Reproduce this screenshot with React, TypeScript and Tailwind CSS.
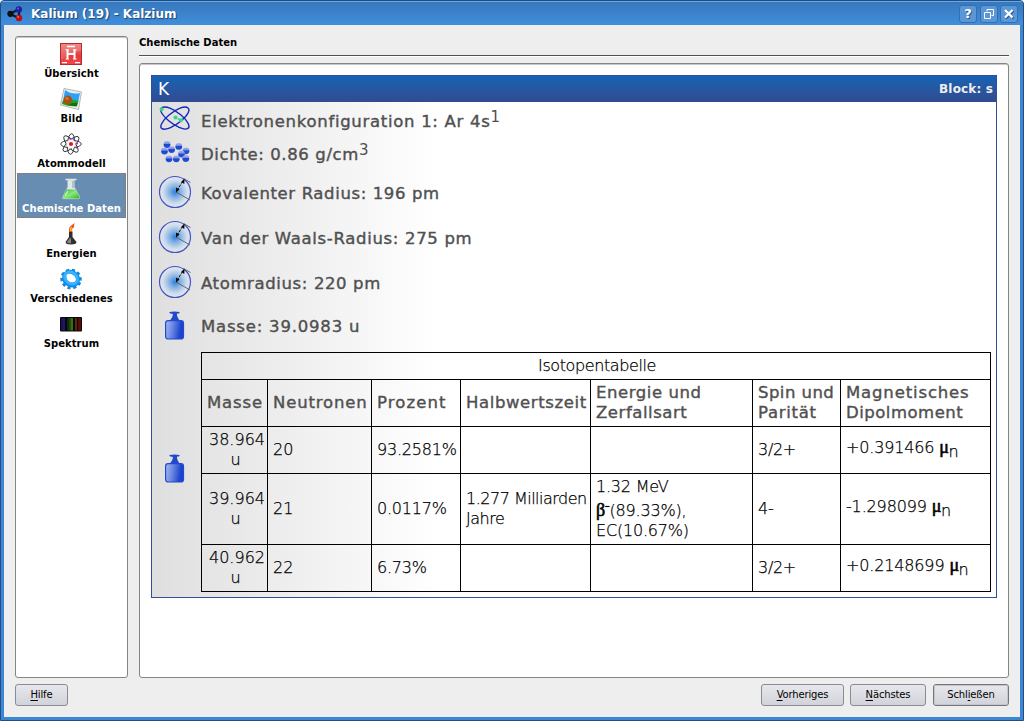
import type { ReactNode } from "react";

function LogoIcon() {
  return (
    <svg width="16" height="16" viewBox="0 0 16 16">
      <path d="M3 8 L12 3 M3 8 L12 12 M12 3 V12" stroke="#111827" strokeWidth="2.2" />
      <circle cx="3.4" cy="7.8" r="3.1" fill="#101010" />
      <circle cx="11.8" cy="3.4" r="3.2" fill="#1d1f9c" />
      <circle cx="12" cy="12" r="3.2" fill="#b80f12" />
      <circle cx="11" cy="2.4" r="1" fill="#6468d8" />
      <circle cx="11.2" cy="11" r="1" fill="#f06a6a" />
    </svg>
  );
}

function OverviewIcon() {
  return (
    <svg width="22" height="22" viewBox="0 0 22 22">
      <defs>
        <linearGradient id="ov" x1="0" y1="0" x2="0" y2="1">
          <stop offset="0" stopColor="#e97070" />
          <stop offset="0.6" stopColor="#e83a3a" />
          <stop offset="1" stopColor="#f04848" />
        </linearGradient>
      </defs>
      <rect x="0.5" y="0.5" width="21" height="21" fill="url(#ov)" stroke="#b92b2b" />
      <path d="M1 1 H21 V8 Q12 9 1 17Z" fill="#fff" opacity="0.18" />
      <path d="M7.5 6.5 V16 M14.5 6.5 V16 M7.5 11 H14.5" stroke="#fff" strokeWidth="2" fill="none" />
      <path d="M5.5 6.8 H9 M13 6.8 H16.5 M5.5 16 H9 M13 16 H16.5" stroke="#fff" strokeWidth="1" />
      <path d="M7 3.5 H15 M2 19.7 H7 M15 19.7 H20" stroke="#fff" strokeWidth="1.3" />
    </svg>
  );
}

function PictureIcon() {
  return (
    <svg width="22" height="22" viewBox="0 0 22 22">
      <path d="M4 0.5 L21.5 4 L18.5 21.5 L0.5 17Z" fill="#eee" stroke="#9a9a9a" strokeWidth="0.7" />
      <path d="M5 2 Q12 7 20 5 L18 15 L3 13Z" fill="#2ba2f6" />
      <path d="M2.5 13 Q10 10 18.4 13 L17 18 Q9 19 2 16Z" fill="#22a31c" />
      <path d="M8 17 Q13 14 17.7 15 L16.5 18.5Z" fill="#0e6e10" />
      <circle cx="7.8" cy="12" r="4.4" fill="#a84f12" />
      <circle cx="7" cy="10.5" r="1.8" fill="#cc7330" />
    </svg>
  );
}

function AtomIcon() {
  return (
    <svg width="22" height="22" viewBox="0 0 22 22" fill="none">
      <g stroke="#2c2c2c" strokeWidth="0.9">
        <ellipse cx="11" cy="11" rx="10.3" ry="3.7" />
        <ellipse cx="11" cy="11" rx="10.3" ry="3.7" transform="rotate(50 11 11)" />
        <ellipse cx="11" cy="11" rx="10.3" ry="3.7" transform="rotate(94 11 11)" />
        <ellipse cx="11" cy="11" rx="10.3" ry="3.7" transform="rotate(137 11 11)" />
      </g>
      <circle cx="11" cy="11" r="4.6" fill="#fff" />
      <circle cx="11" cy="11" r="2.1" fill="#f01414" />
      <g fill="#9a28e0">
        <circle cx="9" cy="5.5" r="1" />
        <circle cx="14" cy="6" r="1" />
        <circle cx="17" cy="10.5" r="1" />
        <circle cx="16.5" cy="14.5" r="1" />
      </g>
    </svg>
  );
}

function FlaskIcon() {
  return (
    <svg width="22" height="22" viewBox="0 0 22 22">
      <defs>
        <linearGradient id="fl" x1="0" y1="0" x2="1" y2="1">
          <stop offset="0" stopColor="#35a84a" />
          <stop offset="0.5" stopColor="#8bea78" />
          <stop offset="1" stopColor="#25b52b" />
        </linearGradient>
      </defs>
      <path d="M7.5 2 H14.5 V9 L20 19 Q20 21 18 21 H4 Q2 21 2.5 19 L7.5 9Z" fill="#dfe8e8" stroke="#9fb4b8" strokeWidth="0.6" />
      <path d="M6.5 11.5 H15.5 L19.5 19 Q19.5 20.5 17.5 20.5 H4.5 Q2.5 20.5 3 19Z" fill="url(#fl)" />
      <path d="M5.5 1.5 H16.5" stroke="#e5e5e5" strokeWidth="1.6" />
      <path d="M13 3 V10" stroke="#a0aeb2" strokeWidth="1.3" />
      <path d="M8 13 L5 18" stroke="#c4ffb8" strokeWidth="1.3" />
    </svg>
  );
}

function BurnerIcon() {
  return (
    <svg width="22" height="22" viewBox="0 0 22 22">
      <path d="M9 9 H12.5 V14 L16.5 19 Q16.5 21.5 11 21.5 Q5.5 21.5 5.5 19 L9 14Z" fill="#303030" />
      <path d="M9.5 15.5 L11 15 V20.5 L6.5 19.5Z" fill="#858585" />
      <path d="M9 9 Q7.5 3.5 15 0 Q13 3 14.5 4 Q11 5 12.5 9Z" fill="#e85018" />
      <path d="M10 8 Q9 5 12 3.5 Q11 6 12 8Z" fill="#ffc22c" />
    </svg>
  );
}

function GearIcon() {
  return (
    <svg width="22" height="22" viewBox="0 0 22 22" fill="none">
      <ellipse cx="11" cy="11" rx="9" ry="8.5" stroke="#1685d7" strokeWidth="3.6" strokeDasharray="3 2.54" transform="rotate(20 11 11)" />
      <ellipse cx="10.8" cy="10.7" rx="7" ry="6.1" stroke="#138be7" strokeWidth="4.7" transform="rotate(38 11 11)" />
      <ellipse cx="10.5" cy="10.2" rx="6.8" ry="5.4" stroke="#36b3ff" strokeWidth="3" transform="rotate(38 11 11)" />
      <ellipse cx="11" cy="9.8" rx="5.3" ry="3.4" fill="#fff" transform="rotate(35 11 10)" />
    </svg>
  );
}

function SpectrumIcon() {
  return (
    <svg width="22" height="22" viewBox="0 0 22 22">
      <rect x="0" y="4" width="22" height="14.5" rx="1" fill="#080808" />
      <g>
        <rect x="1" y="5" width="2" height="12.5" fill="#211044" />
        <rect x="3" y="5" width="2" height="12.5" fill="#24127c" />
        <rect x="7" y="5" width="2" height="12.5" fill="#072d15" />
        <rect x="9" y="5" width="2" height="12.5" fill="#174b10" />
        <rect x="11" y="5" width="2" height="12.5" fill="#49690c" />
        <rect x="15" y="5" width="2" height="12.5" fill="#58290a" />
        <rect x="18" y="5" width="3" height="12.5" fill="#5b0b0b" />
      </g>
    </svg>
  );
}

function OrbitIcon() {
  return (
    <svg width="32" height="26" viewBox="0 0 32 26" fill="none">
      <path
        d="M2.5 3 C6 0 15 4 22 10 C29 16 32 22 28.5 23.7 C25 25.5 16 21 10 16 C3 10 0 5 2.5 3Z"
        stroke="#1426bd"
        strokeWidth="1.4"
      />
      <path
        d="M29 3 C26 0 17 4 10 10 C3 16 0 22 3 23.7 C6 25.5 15 22 22 16 C29 10 31.5 5 29 3Z"
        stroke="#1426bd"
        strokeWidth="1.4"
      />
      <g fill="#35d583">
        <circle cx="2.6" cy="4.3" r="2" />
        <circle cx="16.5" cy="12.5" r="2" />
        <circle cx="22" cy="15.3" r="2" />
        <circle cx="19.5" cy="14" r="1" />
      </g>
    </svg>
  );
}

function DensityIcon() {
  const balls = [
    [6, 3.5], [17.8, 5.4], [3.5, 10], [10.6, 8.6], [25, 9.8], [20.5, 13], [8, 17.8], [15.3, 17.8], [24.8, 17.5],
  ];
  return (
    <svg width="29" height="22" viewBox="0 0 29 22">
      <defs>
        <linearGradient id="ball" x1="0" y1="0" x2="0" y2="1">
          <stop offset="0" stopColor="#a5b6f2" />
          <stop offset="0.4" stopColor="#7590e8" />
          <stop offset="0.5" stopColor="#2043c9" />
          <stop offset="1" stopColor="#2450db" />
        </linearGradient>
      </defs>
      {balls.map(([x, y]) => (
        <circle key={`${x}-${y}`} cx={x} cy={y} r="3.4" fill="url(#ball)" />
      ))}
    </svg>
  );
}

function RadiusIcon() {
  return (
    <svg width="34" height="34" viewBox="0 0 34 34">
      <defs>
        <radialGradient id="rad">
          <stop offset="0" stopColor="#2f7fd8" />
          <stop offset="0.35" stopColor="#83b1e4" />
          <stop offset="0.75" stopColor="#cfdcec" />
          <stop offset="1" stopColor="#e4e7ee" />
        </radialGradient>
      </defs>
      <circle cx="17" cy="17" r="15.5" fill="url(#rad)" stroke="#4455c2" strokeWidth="1.2" />
      <path d="M18 17 L32 25 M25.5 3.5 L32.5 7.5" stroke="#555e6a" strokeWidth="0.9" />
      <path d="M19 15.5 L25.5 5" stroke="#111" strokeWidth="1" strokeDasharray="3 1" />
      <path d="M26.5 3.5 L26.3 9 L23 7Z M18 17.5 L18 12.5 L21.5 14.5Z" fill="#0a0a0a" />
    </svg>
  );
}

function WeightIcon() {
  return (
    <svg width="20" height="29" viewBox="0 0 20 29">
      <defs>
        <linearGradient id="wt" x1="0" y1="0" x2="1" y2="0.15">
          <stop offset="0" stopColor="#a9bbf0" />
          <stop offset="0.45" stopColor="#6784e2" />
          <stop offset="0.9" stopColor="#1b43cd" />
        </linearGradient>
      </defs>
      <path d="M4.5 1 Q9.500 0 14.500 1 Q15 2.500 12.500 2.500 L11.800 3 Q12 6.500 14.500 9.500 H5 Q8 6 8 3 L5.500 2.500 Q4 2 4.500 1Z" fill="#2148cd" />
      <rect x="0.6" y="9.7" width="17.9" height="18.3" rx="2.5" fill="url(#wt)" stroke="#2449ce" strokeWidth="1.2" />
    </svg>
  );
}

const nav: { label: string; icon: ReactNode; active?: boolean }[] = [
  { label: "Übersicht", icon: <OverviewIcon /> },
  { label: "Bild", icon: <PictureIcon /> },
  { label: "Atommodell", icon: <AtomIcon /> },
  { label: "Chemische Daten", icon: <FlaskIcon />, active: true },
  { label: "Energien", icon: <BurnerIcon /> },
  { label: "Verschiedenes", icon: <GearIcon /> },
  { label: "Spektrum", icon: <SpectrumIcon /> },
];

function TitleButton({ children }: { children: ReactNode }) {
  return (
    <div className="flex h-[18px] w-[18px] items-center justify-center rounded-[3px] border border-[#3470b0] bg-[#5b96d6]">
      {children}
    </div>
  );
}

function DataRow({ icon, row, text = "pt-[2px] tracking-[0.62px]", children }: { icon: ReactNode; row: string; text?: string; children: ReactNode }) {
  return (
    <div className={`flex items-center ${row}`}>
      <div className="flex w-[46px] shrink-0 justify-center pb-[2px]">{icon}</div>
      <div className={`ml-[3px] whitespace-nowrap text-[16.5px] leading-[20px] text-[#505050] [-webkit-text-stroke:0.4px_#505050] ${text}`}>
        {children}
      </div>
    </div>
  );
}

function Exponent({ children }: { children: ReactNode }) {
  return <sup className="top-[-5px] text-[15px] [-webkit-text-stroke:0px]">{children}</sup>;
}

function Button({ before = "", hot, after, width, primary }: { before?: string; hot: string; after: string; width: string; primary?: boolean }) {
  return (
    <button
      className={`flex h-[22px] items-center justify-center rounded-[3px] border bg-linear-to-b from-[#e7e8ed] to-[#d2d3da] text-[10px] tracking-[-0.15px] text-black ${width} ${
        primary ? "ml-[1px] border-[#70767a] outline outline-1 -outline-offset-2 outline-[#c4c6ca]" : "border-[#8b8c91]"
      }`}
    >
      <span className="-translate-y-px whitespace-pre">
        {before}
        <span className="underline underline-offset-2">{hot}</span>
        {after}
      </span>
    </button>
  );
}

function Greek({ children }: { children: ReactNode }) {
  return (
    <span className="font-['Liberation_Serif',serif] text-[18px] font-normal leading-none tracking-[-0.5px] [-webkit-text-stroke:0.6px_#000]">
      {children}
    </span>
  );
}

function Moment({ value }: { value: string }) {
  return (
    <span className="relative -top-[2px] whitespace-nowrap">
      {value} <Greek>μ</Greek>
      <sub className="bottom-[-4px] text-[16px]">n</sub>
    </span>
  );
}

const cell = "border-b border-r border-black px-[5px] py-0 align-middle";

export default function App() {
  const isotopes = [
    { mass: "38.964", n: "20", pct: "93.2581%", half: null, energy: null, spin: "3/2+", moment: "+0.391466", h: "h-[47px]" },
    {
      mass: "39.964",
      n: "21",
      pct: "0.0117%",
      half: <>1.277 Milliarden<br />Jahre</>,
      energy: (
        <>
          <div>1.32 MeV</div>
          <div className="pt-[4px]">
            <Greek>β</Greek>
            <sup className="top-[-6px] text-[14px] [-webkit-text-stroke:0.6px_#000]">-</sup>(89.33%),
          </div>
          <div>EC(10.67%)</div>
        </>
      ),
      spin: "4-",
      moment: "-1.298099",
      h: "h-[71px]",
    },
    { mass: "40.962", n: "22", pct: "6.73%", half: null, energy: null, spin: "3/2+", moment: "+0.2148699", h: "h-[47px]" },
  ];

  return (
    <div className="flex h-[721px] w-[1024px] flex-col overflow-hidden rounded-t-[4px] border border-[#244c7c] bg-[#3c86d3] font-['DejaVu_Sans',sans-serif]">
      <header className="flex h-[24px] shrink-0 items-center border-t border-[#62a8ed] bg-linear-to-b from-[#3778bc] to-[#408edc] pl-[6px] pr-[5px]">
        <LogoIcon />
        <h1 className="ml-[8px] flex-1 text-[12px] font-bold text-white [text-shadow:1px_1px_1px_#1c4474]">
          Kalium (19) - Kalzium
        </h1>
        <div className="flex gap-[2px]">
          <div className="mr-[1px]">
            <TitleButton>
              <span className="text-[13px] font-bold leading-none text-white [text-shadow:1px_1px_0_#2b5687]">?</span>
            </TitleButton>
          </div>
          <TitleButton>
            <svg width="10" height="10" viewBox="0 0 10 10" fill="none" stroke="#fff">
              <path d="M3 2.5 V0.5 H9.5 V6.5 H7.5" />
              <path d="M0.5 3.5 H6.5 V9.5 H0.5Z" />
            </svg>
          </TitleButton>
          <TitleButton>
            <svg width="10" height="10" viewBox="0 0 10 10" fill="none">
              <path d="M2 2 L9.5 9.5 M9.5 2 L2 9.5" stroke="#2b5687" strokeWidth="2" />
              <path d="M1 1 L8.5 8.5 M8.5 1 L1 8.5" stroke="#fff" strokeWidth="2.2" />
            </svg>
          </TitleButton>
        </div>
      </header>

      <div className="mb-[3px] ml-[3px] mr-[3px] flex min-h-0 flex-1 flex-col bg-[#eeeeee] pl-[11px] pr-[11px]">
        <div className="flex h-[653px] shrink-0 gap-[11px]">
          <nav className="mt-[11px] w-[113px] shrink-0 rounded-[3px] border border-[#858585] bg-white px-px pt-[1px] shadow-[inset_0_1px_0_#c8c8c8]">
            {nav.map((item) => (
              <div
                key={item.label}
                className={`flex h-[45px] flex-col items-center pt-[5px] ${
                  item.active ? "bg-[#678db2] text-white outline-dotted outline-1 -outline-offset-1 outline-[#98724d]" : "text-black"
                }`}
              >
                <div className="mr-[2px]">{item.icon}</div>
                <span className="mt-[3px] whitespace-nowrap text-[10px] font-bold leading-[12px] tracking-[0.05px]">{item.label}</span>
              </div>
            ))}
          </nav>

          <main className="flex min-w-0 flex-1 flex-col">
            <h2 className="h-[31px] shrink-0 border-b border-[#505050] pt-[11px] text-[10px] font-bold leading-[14px] shadow-[0_1px_0_#fff]">
              Chemische Daten
            </h2>
            <section className="mt-[7px] min-h-0 flex-1 rounded-[3px] border border-[#858585] bg-white pl-[11px] pr-[11px] pt-[11px] shadow-[inset_0_1px_0_#c8c8c8]">
              <div className="h-[523px] w-[846px] border border-[#2f4f96] bg-linear-to-r from-[#dfdfdf] to-white to-[34%]">
                <div className="flex h-[26px] items-center justify-between bg-linear-to-b from-[#1363b2] to-[#304b91] pl-[6px] pr-[3px] text-white">
                  <span className="text-[17px] leading-none">K</span>
                  <span className="text-[12px] font-bold tracking-[0.15px] text-[#eeeeee]">Block: s</span>
                </div>

                <DataRow row="h-[34px]" text="pt-[6px] tracking-[0.7px]" icon={<OrbitIcon />}>
                  Elektronenkonfiguration 1: Ar 4s<Exponent>1</Exponent>
                </DataRow>
                <DataRow row="h-[34px]" text="pt-[4px] tracking-[0.62px]" icon={<DensityIcon />}>
                  Dichte: 0.86 g/cm<Exponent>3</Exponent>
                </DataRow>
                <DataRow row="h-[45px]" icon={<RadiusIcon />}>Kovalenter Radius: 196 pm</DataRow>
                <DataRow row="h-[45px]" text="pt-[2px] tracking-[0.67px]" icon={<RadiusIcon />}>Van der Waals-Radius: 275 pm</DataRow>
                <DataRow row="h-[45px]" icon={<RadiusIcon />}>Atomradius: 220 pm</DataRow>
                <DataRow row="h-[42px]" text="pt-[2px] tracking-[0.8px]" icon={<WeightIcon />}>Masse: 39.0983 u</DataRow>

                <div className="flex items-center pt-[5px]">
                  <div className="flex w-[46px] shrink-0 justify-center pb-[7px]">
                    <WeightIcon />
                  </div>
                  <table className="ml-[3px] w-[790px] table-fixed border-separate border-spacing-0 border-l border-t border-black text-[16px] font-extralight leading-[20px] text-black [-webkit-text-stroke:0.25px_#000]">
                    <colgroup>
                      <col className="w-[66px]" />
                      <col className="w-[104px]" />
                      <col className="w-[89px]" />
                      <col className="w-[130px]" />
                      <col className="w-[162px]" />
                      <col className="w-[88px]" />
                      <col className="w-[150px]" />
                    </colgroup>
                    <tbody>
                      <tr className="h-[27px]">
                        <td colSpan={7} className={`${cell} text-center tracking-[-0.4px]`}>
                          <span className="ml-[2px]">Isotopentabelle</span>
                        </td>
                      </tr>
                      <tr className="h-[47px] text-left text-[16.5px] font-normal tracking-[0.85px] text-[#505050] [-webkit-text-stroke:0.4px_#505050]">
                        <td className={cell}>Masse</td>
                        <td className={cell}>Neutronen</td>
                        <td className={`${cell} tracking-[1.1px]`}>Prozent</td>
                        <td className={`${cell} whitespace-nowrap tracking-[0.6px]`}>Halbwertszeit</td>
                        <td className={`${cell} tracking-[0.55px]`}>Energie und<br />Zerfallsart</td>
                        <td className={`${cell} whitespace-nowrap tracking-[0.45px]`}>
                          Spin und<br /><span className="tracking-[0.7px]">Parität</span>
                        </td>
                        <td className={cell}>
                          Magnetisches<br /><span className="tracking-[0.5px]">Dipolmoment</span>
                        </td>
                      </tr>
                      {isotopes.map((row) => (
                        <tr key={row.mass} className={row.h}>
                          <td className={`${cell} pl-[7px] text-center`}>{row.mass}<br />u</td>
                          <td className={cell}>{row.n}</td>
                          <td className={`${cell} tracking-[-0.2px]`}>{row.pct}</td>
                          <td className={`${cell} whitespace-nowrap tracking-[-0.5px]`}>{row.half}</td>
                          <td className={`${cell} tracking-[-0.2px]`}>{row.energy}</td>
                          <td className={`${cell} tracking-[-0.3px]`}>{row.spin}</td>
                          <td className={`${cell} tracking-[-0.15px]`}><Moment value={row.moment} /></td>
                        </tr>
                      ))}
                    </tbody>
                  </table>
                </div>
              </div>
            </section>
          </main>
        </div>

        <footer className="flex pt-[6px]">
          <Button width="w-[53px]" hot="H" after="ilfe" />
          <div className="ml-auto flex gap-[6px]">
            <Button width="w-[83px]" hot="V" after="orheriges" />
            <Button width="w-[76px]" hot="N" after="ächstes" />
            <Button width="w-[76px]" before="Schl" hot="i" after="eßen" primary />
          </div>
        </footer>
      </div>
    </div>
  );
}
